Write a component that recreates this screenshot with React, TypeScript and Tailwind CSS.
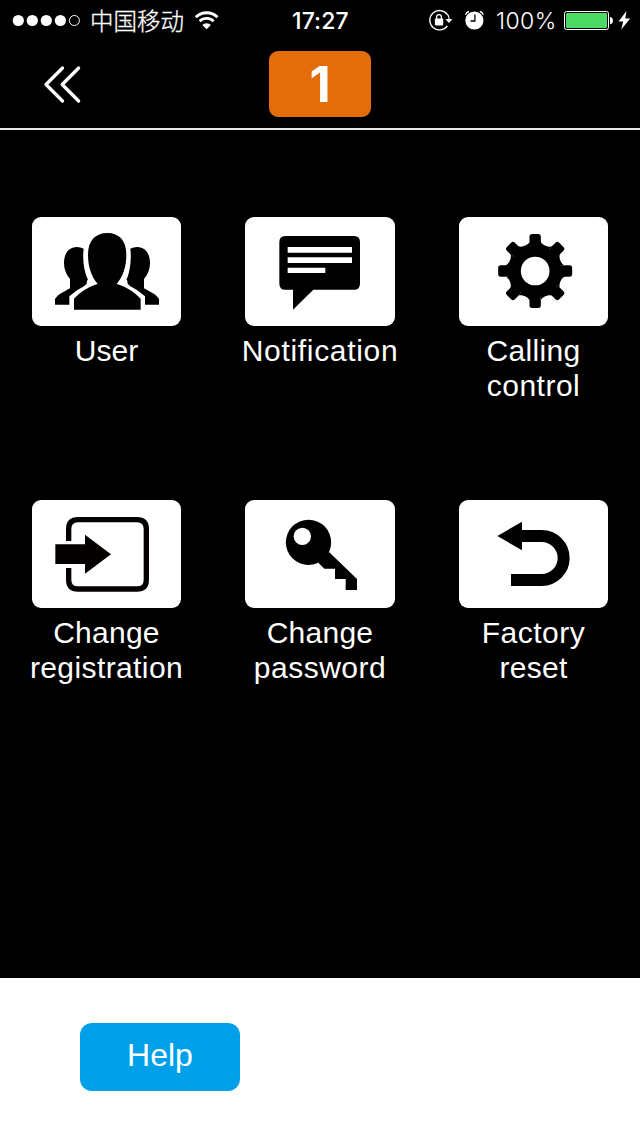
import type { ReactNode } from 'react';

const SANS = "font-['Liberation_Sans',Arial,sans-serif]";

function StatusBar() {
  return (
    <div className="flex h-10 items-center">
      <svg className="ml-[12px] h-10 w-[70px] shrink-0" viewBox="12 0 70 40" fill="#fff">
        <circle cx="18.3" cy="20.5" r="5.6" />
        <circle cx="32.3" cy="20.5" r="5.6" />
        <circle cx="46.3" cy="20.5" r="5.6" />
        <circle cx="60.4" cy="20.5" r="5.6" />
        <circle cx="74.4" cy="20.5" r="5" fill="none" stroke="#fff" />
      </svg>
      <span className="ml-[8px] w-[96px] shrink-0 whitespace-nowrap font-['Noto_Sans_CJK_SC',sans-serif] text-[23.5px] leading-10 font-light [-webkit-text-stroke:0.3px]">
        中国移动
      </span>
      <svg className="ml-[8px] h-10 w-[26px] shrink-0" viewBox="194 0 26 40" fill="none" stroke="#fff">
        <path d="M195.8 17.300a15.300 15.300 0 0 1 21.700 0" strokeWidth="3" />
        <path d="M199.700 21.300a9.800 9.800 0 0 1 13.900 0" strokeWidth="2.8" />
        <path d="M206.600 29.200l-4.300-4.200a6 6 0 0 1 8.600 0z" fill="#fff" stroke="none" />
      </svg>
      <span className="ml-[72px] w-[60px] shrink-0 pt-px whitespace-nowrap font-['Inter',sans-serif] text-[23px] leading-10 font-medium tracking-[0.1px]">
        17:27
      </span>
      <svg className="ml-[76px] h-10 w-[60px] shrink-0" viewBox="428 0 60 40" fill="none" stroke="#fff">
        <path d="M447.400 14.600a9.700 9.700 0 1 0 0 11.200" strokeWidth="1.3" />
        <path d="M447.400 14.200c1.300 1.600 1.800 3.200 1.800 5.600" strokeWidth="1.3" />
        <path d="M445.300 19h7.200l-3.600 4z" fill="#fff" stroke="none" />
        <rect x="434.9" y="18.4" width="8.3" height="7" rx=".8" fill="#fff" stroke="none" />
        <path d="M436.600 19v-2a2.400 2.400 0 0 1 4.800 0v2" strokeWidth="1.3" />
        <circle cx="474.4" cy="20.5" r="9.1" fill="#fff" stroke="none" />
        <path d="M474.900 14.400v6.600h-4.400" stroke="#000" strokeWidth="1.3" />
        <path d="M465.500 14.800c.4-1.600 1.600-2.900 3.500-3.300M483.300 14.800c-.4-1.600-1.600-2.900-3.500-3.300" strokeWidth="1.3" />
      </svg>
      <span className="ml-[8px] w-[64px] shrink-0 pt-px whitespace-nowrap font-['Inter',sans-serif] text-[23px] leading-10 font-light tracking-[0.4px]">
        100%
      </span>
      <svg className="ml-[3px] h-10 w-[69px] shrink-0" viewBox="563 0 69 40">
        <rect x="564.5" y="11.5" width="44" height="18" rx="2" fill="none" stroke="#fff" />
        <rect x="566" y="13" width="41" height="15" rx="1" fill="#4cd964" />
        <path d="M610 17h1q2 1 2 3.500t-2 3.500h-1z" fill="#fff" />
        <path d="M626.500 11l-8 10.500h4.700l-2 8 9-11h-4.900z" fill="#fff" />
      </svg>
    </div>
  );
}

function Tile({ label, width, height, children }: { label: ReactNode; width: string; height: string; children: ReactNode }) {
  return (
    <div className="flex flex-col items-center">
      <div className={`overflow-hidden rounded-[9px] bg-white ${width} ${height}`}>{children}</div>
      <div className={`mt-[7px] text-center whitespace-nowrap text-[30px] leading-[35px] ${SANS}`}>{label}</div>
    </div>
  );
}

const TEETH = [0, 45, 90, 135, 180, 225, 270, 315];

export default function App() {
  return (
    <div className="flex h-[1136px] w-[640px] flex-col overflow-hidden bg-black text-white">
      <StatusBar />
      <header className="flex h-[90px] border-b-2 border-[#e6e6e4] pt-[11px]">
        <svg className="mt-[13px] ml-[43px] h-10 w-[40px]" viewBox="43 64 40 40" fill="none" stroke="#fff" strokeWidth="3.3" strokeLinecap="round" strokeLinejoin="round">
          <path d="M62.500 68L46 84.500l16.500 16.500M78.600 68L62.200 84.500l16.400 16.500" />
        </svg>
        <div className="ml-[186px] flex h-[66px] w-[102px] items-center justify-center rounded-[9px] bg-[#e46c0a] pt-[2px] font-['Inter',sans-serif] text-[49px] font-bold">
          1
        </div>
      </header>
      <main className="grid flex-1 grid-cols-[213px_214px_213px] content-start pt-[87px]">
        <div className="h-[283px]">
          <Tile label="User" width="w-[149px]" height="h-[109px]">
            <svg className="size-full" viewBox="36 36 447 327">
              <path d="M191 131q-9-5-21-5C146 127 132 146 132 174c0 18 6 35 18 48v28l-20 11q-17 8-25 21v17h43v-25q22-20 44-30l8-8 1-8 3-6-3-4C192 195 187 165 191 131z" />
              <path d="M331 131q9-5 21-5C376 127 390 146 390 174c0 18-6 35-18 48v28l20 11q17 8 25 21v17h-42v-25q-22-20-44-30l-8-8-1-8-3-6 3-4C330 195 335 165 331 131z" />
              <path d="M262 84c-36 0-58 23-58 65 0 35 10 65 29 88-25 8-49 21-71 44v33h200v-33c-22-23-46-36-72-44 19-23 29-53 29-88 0-42-21-65-57-65z" />
            </svg>
          </Tile>
        </div>
        <Tile label={<span className="tracking-[0.68px]">Notification</span>} width="w-[150px]" height="h-[109px]">
          <svg className="size-full" viewBox="30 36 450 327">
            <path d="M151 93h206q18 0 18 18v125q0 18-18 18H235l-61 60v-60h-23q-18 0-18-18V111q0-18 18-18z" />
            <path d="M158 126h193v17H158zM158 157h193v17H158zM158 188h113v16H158z" fill="#fff" />
          </svg>
        </Tile>
        <Tile label={<><span className="tracking-[0.35px]">Calling</span><br /><span className="tracking-[0.5px]">control</span></>} width="w-[149px]" height="h-[109px]">
          <svg className="size-full" viewBox="27 36 447 327">
            <g transform="translate(255.500 198)">
              <circle r="77" />
              {TEETH.map((angle) => (
                <path key={angle} transform={`rotate(${angle})`} d="M0 0L-17-88V-103Q-17-111-9-111H9Q17-111 17-103V-88C21-78 40-70 50.200-74.200Z" />
              ))}
              <circle r="43" fill="#fff" />
            </g>
          </svg>
        </Tile>
        <Tile label={<><span className="tracking-[0.25px]">Change</span><br /><span className="tracking-[0.4px]">registration</span></>} width="w-[149px]" height="h-[108px]">
          <svg className="size-full" viewBox="36 30 447 324">
            <path d="M146 153v-36q0-28 28-28h177q28 0 28 28v152q0 28-28 28H174q-28 0-28-28v-35" fill="none" stroke="#040000" strokeWidth="16" />
            <path d="M106 163h89v-29l78 59-78 58v-29h-89z" fill="#040000" />
          </svg>
        </Tile>
        <Tile label={<><span className="tracking-[0.25px]">Change</span><br /><span className="tracking-[0.5px]">password</span></>} width="w-[150px]" height="h-[108px]">
          <svg className="size-full" viewBox="30 30 450 324">
            <circle cx="220.500" cy="157" r="68" />
            <path d="M282 186l84 81v33h-34v-33h-32v-31h-32l-18-18z" />
            <circle cx="202" cy="139" r="26" fill="#fff" />
          </svg>
        </Tile>
        <Tile label={<><span className="tracking-[0.5px]">Factory</span><br /><span className="tracking-[0.3px]">reset</span></>} width="w-[149px]" height="h-[108px]">
          <svg className="size-full" viewBox="27 30 447 324">
            <path d="M216 138h59a65.500 65.500 0 0 1 0 132h-92" fill="none" stroke="#000" strokeWidth="36" />
            <path d="M142 138l74-43v86z" />
          </svg>
        </Tile>
      </main>
      <footer className="h-[158px] bg-white pt-[45px] pl-20">
        <button className={`flex h-[68px] w-40 items-center justify-center rounded-[12px] bg-[#00a0e9] pb-[4px] text-[32px] text-white ${SANS}`}>
          Help
        </button>
      </footer>
    </div>
  );
}
